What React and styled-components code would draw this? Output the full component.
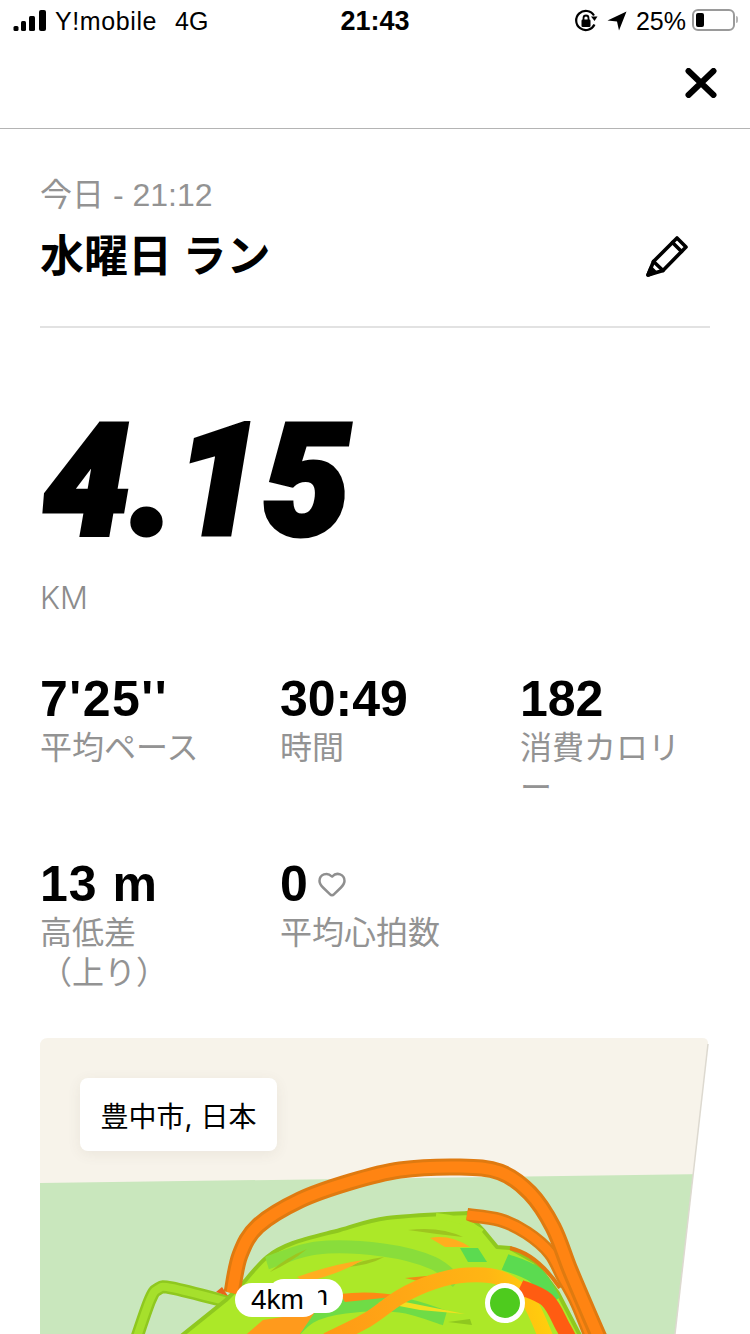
import React from 'react'
import styled, { createGlobalStyle } from 'styled-components'
import { Heart } from 'lucide-react'

const GlobalStyle = createGlobalStyle`
  html, body {
    margin: 0;
    padding: 0;
    background: #fff;
  }
  body {
    font-family: Inter, "Noto Sans CJK JP", sans-serif;
  }
`
const Screen = styled.div`
  width: 750px;
  height: 1334px;
  overflow: hidden;
  background: #fff;
  color: #000;
`
const StatusBar = styled.div`
  height: 42px;
  padding: 0 13px;
  box-sizing: border-box;
  display: grid;
  grid-template-columns: 1fr auto 1fr;
  align-items: center;
  font-size: 25px;
  font-family: "Liberation Sans", sans-serif;
`
const StatusLeft = styled.div`
  display: flex;
  align-items: center;
  gap: 8px;
`
const StatusRight = styled.div`
  display: flex;
  align-items: center;
  justify-content: flex-end;
  gap: 9px;
`
const Carrier = styled.span`
  letter-spacing: 0.6px;
`
const Network = styled.span`
  margin-left: 10px;
`
const Clock = styled.div`
  font-weight: 700;
  font-size: 27px;
`
const Battery = styled.div`
  width: 43px;
  height: 22px;
  margin-left: -3px;
  margin-right: 2px;
  margin-top: -2px;
  box-sizing: border-box;
  border: 2px solid #9a9a9a;
  border-radius: 6px;
  padding: 2px;
  position: relative;
  display: flex;
  &::after {
    content: '';
    position: absolute;
    right: -5px;
    top: 5px;
    width: 2px;
    height: 7px;
    border-radius: 0 2px 2px 0;
    background: #b5b5b5;
  }
`
const BatteryFill = styled.div`
  width: 8px;
  border-radius: 2px;
  background: #000;
`
const Nav = styled.div`
  height: 87px;
  box-sizing: border-box;
  border-bottom: 1px solid #b4b4b4;
  display: flex;
  align-items: center;
  justify-content: flex-end;
  padding: 0 33px 4px 0;
`
const Content = styled.div`
  padding: 0 40px;
`
const Heading = styled.div`
  padding-top: 46px;
  height: 199px;
  box-sizing: border-box;
  border-bottom: 2px solid #e2e2e2;
`
const DateLine = styled.div`
  font-family: "Liberation Sans", "Noto Sans CJK JP", sans-serif;
  font-size: 32px;
  line-height: 40px;
  color: #939393;
`
const TitleRow = styled.div`
  display: flex;
  align-items: center;
  justify-content: space-between;
  margin-top: 11px;
  padding-right: 20px;
`
const Title = styled.h1`
  margin: 0;
  font-size: 44px;
  line-height: 60px;
  font-weight: 700;
`
const Distance = styled.div`
  margin-top: 67px;
  padding-left: 3px;
  font-family: Roboto, sans-serif;
  font-size: 155px;
  font-weight: 900;
  font-style: italic;
  line-height: 172px;
  letter-spacing: 0;
  -webkit-text-stroke: 5px #000;
`
const Unit = styled.div`
  margin-top: 11px;
  font-size: 31px;
  line-height: 40px;
  font-weight: 300;
  color: #8c8c8c;
`
const Stats = styled.div`
  display: grid;
  grid-template-columns: repeat(3, 170px);
  column-gap: 70px;
  row-gap: 45px;
  margin-top: 58px;
`
const Stat = styled.div`
  min-height: 140px;
`
const Value = styled.div`
  display: flex;
  align-items: center;
  gap: 9px;
  font-family: "Liberation Sans", sans-serif;
  font-size: 50px;
  line-height: 46px;
  font-weight: 700;
  letter-spacing: ${p => p.$spacing || 0}px;
`
const Label = styled.div`
  font-size: 32px;
  line-height: 40px;
  margin-top: 6px;
  color: #939393;
`
const MapWrap = styled.div`
  position: relative;
  margin-top: 37px;
  width: 670px;
  height: 296px;
`
const MapArt = styled.svg`
  display: block;
`
const PlaceCard = styled.div`
  position: absolute;
  left: 40px;
  top: 40px;
  width: 197px;
  height: 73px;
  border-radius: 8px;
  background: #fff;
  box-shadow: 0 3px 14px rgba(90, 80, 60, 0.08);
  display: flex;
  align-items: center;
  justify-content: center;
  font-size: 28px;
`
const Pill = styled.div`
  position: absolute;
  left: ${p => p.$left}px;
  top: ${p => p.$top}px;
  width: ${p => p.$width}px;
  height: 34px;
  border-radius: 17px;
  background: #fff;
  display: flex;
  align-items: center;
  justify-content: ${p => p.$end ? 'flex-end' : 'center'};
  padding-right: ${p => p.$end ? 15 : 0}px;
  box-sizing: border-box;
  font-family: "Liberation Sans", sans-serif;
  font-size: 28px;
`

const SignalIcon = () => (
  <svg width="34" height="22" viewBox="0 0 34 22">
    <rect x="0.5" y="16" width="5" height="5" rx="1.5" />
    <rect x="8" y="11" width="5" height="10" rx="1.5" />
    <rect x="16" y="6" width="6" height="15" rx="1.5" />
    <rect x="26" y="0" width="7" height="21" rx="2" />
  </svg>
)

const LockIcon = () => (
  <svg width="24" height="24" viewBox="0 0 24 24">
    <path d="M20.5 15.5A9.6 9.6 0 1 1 20 6.5" fill="none" stroke="#000" strokeWidth="2.2" />
    <path d="M17 7.5h6.5L20.5 12z" />
    <rect x="7.5" y="10.5" width="9" height="7.5" rx="1.2" />
    <path d="M9.5 11V9a2.5 2.5 0 0 1 5 0v2" fill="none" stroke="#000" strokeWidth="1.8" />
  </svg>
)

const ArrowIcon = () => (
  <svg width="20" height="20" viewBox="0 0 20 20">
    <path d="M19.5 0.5L0.5 9.5L10 10.5L12 19.5z" />
  </svg>
)

const CloseIcon = () => (
  <svg width="32" height="30" viewBox="0 0 32 30">
    <path d="M3.5 3L28.5 27M28.5 3L3.5 27" stroke="#000" strokeWidth="6" strokeLinecap="round" />
  </svg>
)

const PencilIcon = () => (
  <svg width="46" height="46" viewBox="644 235 46 46" fill="none" stroke="#000" strokeWidth="3.6" strokeLinejoin="round" strokeLinecap="round">
    <path d="M648 277L653.500 263.500L677 240L686 249L663 272.500z" />
    <path d="M672.500 244.500L681.500 253.500M653.500 263.500L663 272.500" />
    <path d="M648 277L651 270L655 274z" fill="#000" />
  </svg>
)

// catmull-rom through the traced points, so the laps don't kink
const smooth = pts => {
  let d = `M${pts[0][0]} ${pts[0][1]}`
  for (let i = 0; i < pts.length - 1; i++) {
    const p0 = pts[i - 1] || pts[i]
    const p1 = pts[i]
    const p2 = pts[i + 1]
    const p3 = pts[i + 2] || p2
    const c1 = [p1[0] + (p2[0] - p0[0]) / 6, p1[1] + (p2[1] - p0[1]) / 6]
    const c2 = [p2[0] - (p3[0] - p1[0]) / 6, p2[1] - (p3[1] - p1[1]) / 6]
    d += `C${c1[0]} ${c1[1]} ${c2[0]} ${c2[1]} ${p2[0]} ${p2[1]}`
  }
  return d
}

const bigArc = smooth([[232, 1293], [240, 1255], [258, 1226], [300, 1200], [350, 1182], [400, 1170], [460, 1167], [500, 1172], [530, 1193], [553, 1227], [570, 1270], [587, 1310], [600, 1340]])
const innerArc = smooth([[467, 1215], [500, 1220], [527, 1233], [550, 1253], [563, 1277], [577, 1303], [592, 1340]])
const loop = smooth([[232, 1303], [172, 1288], [158, 1289], [150, 1300], [136, 1340]])
const blobTop = smooth([[243, 1283], [267, 1257], [293, 1243], [340, 1230], [387, 1218], [467, 1213]])
const blob = `${blobTop}L483 1230L497 1247L510 1248L535 1262L558 1293L585 1345H170L226 1300z`
const greenBand = smooth([[267, 1263], [317, 1248], [383, 1250], [433, 1263], [457, 1282]])
const greenPatch = smooth([[505, 1262], [535, 1275], [553, 1302]])
const lowerBand = smooth([[285, 1340], [310, 1316], [345, 1306], [400, 1305], [445, 1318]])
const mainRun = smooth([[327, 1340], [367, 1320], [400, 1297], [433, 1282], [467, 1275], [500, 1278], [527, 1298], [547, 1340]])
const redRun = smooth([[520, 1287], [547, 1300], [563, 1327], [570, 1340]])

// page coordinates are kept in the viewBox so the route lines up with the screenshot
const RouteMap = () => (
  <MapArt width="670" height="296" viewBox="40 1038 670 296">
    <defs>
      <clipPath id="mapShape">
        <path d="M40 1046Q40 1038 48 1038H702Q708.500 1038 708 1044L675 1334H40z" />
      </clipPath>
      <linearGradient id="mainRun" x1="327" y1="1334" x2="547" y2="1290" gradientUnits="userSpaceOnUse">
        <stop offset="0" stopColor="#ff9a16" />
        <stop offset="0.75" stopColor="#ffb514" />
        <stop offset="1" stopColor="#ffd00c" />
      </linearGradient>
    </defs>
    <g clipPath="url(#mapShape)" fill="none" strokeLinejoin="round">
      <rect x="40" y="1038" width="670" height="296" fill="#f7f3ea" />
      <path d="M40 1183L710 1174V1334H40z" fill="#c9e7bd" />

      {/* small loop on the left */}
      <path d={loop} stroke="#8fc81f" strokeWidth="13" />
      <path d={loop} stroke="#a6e02c" strokeWidth="8" />

      {/* blob of overlapping laps */}
      <path d={blob} fill="#ace828" stroke="#8fc81f" strokeWidth="4" />
      <path d={greenBand} stroke="#89dd3b" strokeWidth="13" />
      <path d={greenPatch} stroke="#5bdb50" strokeWidth="17" />
      <path d={lowerBand} stroke="#6fdc46" strokeWidth="15" />
      <path d="M263 1320L315 1312L300 1334L240 1340z" fill="#ff9a1c" />
      <path d="M216 1292L222 1287L228 1296z" fill="#e8641a" />

      <path d="M460 1248L478 1248L487 1262L468 1262z" fill="#5bdb50" />
      <path d="M408 1230Q440 1226 463 1237Q435 1234 408 1230z" fill="#9ec51f" />
      <path d="M270 1272Q285 1258 307 1249Q290 1263 270 1272z" fill="#9ec51f" />
      <path d="M347 1267Q362 1260 384 1257Q370 1265 347 1267z" fill="#9ec51f" />
      <path d="M430 1238Q450 1234 470 1247L445 1247z" fill="#ffae1e" />
      <path d="M297 1277Q330 1265 363 1260Q340 1274 305 1282z" fill="#ffae20" />
      <path d="M340 1294Q370 1290 402 1296L345 1302z" fill="#ff8a14" />
      <path d="M378 1302L400 1301L465 1314L420 1310z" fill="#f0e020" />
      <path d="M405 1278L448 1274L432 1284z" fill="#f18d14" />
      <path d="M448 1322L470 1319L472 1325z" fill="#8fc81f" />

      {/* later laps and the long way round */}
      <path d={mainRun} stroke="url(#mainRun)" strokeWidth="15" />
      <path d={redRun} stroke="#ff5c12" strokeWidth="15" />
      <path d="M510 1248Q537 1254 560 1288" stroke="#e07a10" strokeWidth="4" />
      <path d={innerArc} stroke="#dc7c12" strokeWidth="14" />
      <path d={innerArc} stroke="#ff8412" strokeWidth="9" />
      <path d="M436 1216Q462 1218 482 1232" stroke="#ace828" strokeWidth="6" />
      <path d={bigArc} stroke="#df7a10" strokeWidth="17" />
      <path d={bigArc} stroke="#ff8412" strokeWidth="11" />

      <circle cx="505" cy="1303" r="17.500" fill="#4ecb1e" stroke="#fff" strokeWidth="5" />
    </g>
    <path d="M708 1044L675 1334" fill="none" stroke="#ddd9d0" strokeWidth="1.500" />
  </MapArt>
)

const stats = [
  { value: "7'25''", label: ['平均ペース'], spacing: 1.5 },
  { value: '30:49', label: ['時間'] },
  { value: '182', label: ['消費カロリ', 'ー'] },
  { value: '13 m', label: ['高低差', '（上り）'], spacing: 1 },
  { value: '0', label: ['平均心拍数'], heart: true },
]

const App = () => {
  return (
    <Screen>
      <GlobalStyle />
      <StatusBar>
        <StatusLeft>
          <SignalIcon />
          <Carrier>Y!mobile</Carrier>
          <Network>4G</Network>
        </StatusLeft>
        <Clock>21:43</Clock>
        <StatusRight>
          <LockIcon />
          <ArrowIcon />
          <span>25%</span>
          <Battery><BatteryFill /></Battery>
        </StatusRight>
      </StatusBar>
      <Nav><CloseIcon /></Nav>
      <Content>
        <Heading>
          <DateLine>今日 - 21:12</DateLine>
          <TitleRow>
            <Title>水曜日 ラン</Title>
            <PencilIcon />
          </TitleRow>
        </Heading>
        <Distance>4.15</Distance>
        <Unit>KM</Unit>
        <Stats>
          {stats.map(s => (
            <Stat key={s.value}>
              <Value $spacing={s.spacing}>
                {s.value}
                {s.heart && <Heart size={30} color="#8f8f8f" strokeWidth={2} />}
              </Value>
              <Label>{s.label.map(l => <div key={l}>{l}</div>)}</Label>
            </Stat>
          ))}
        </Stats>
        <MapWrap>
          <RouteMap />
          <PlaceCard>豊中市, 日本</PlaceCard>
          <Pill $left={227} $top={241} $width={76} $end>3km</Pill>
          <Pill $left={195} $top={245} $width={85}>4km</Pill>
        </MapWrap>
      </Content>
    </Screen>
  )
}

export default App
